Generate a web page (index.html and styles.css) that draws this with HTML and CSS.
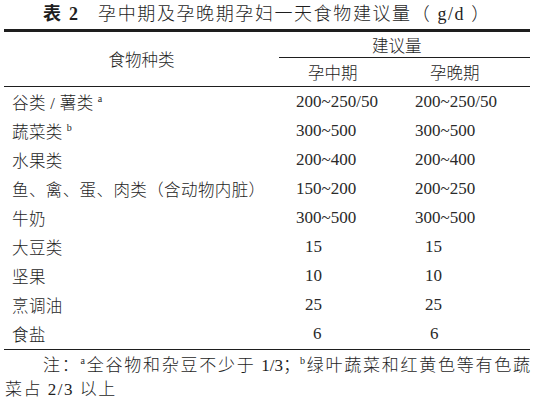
FILE: index.html
```html
<!DOCTYPE html>
<html lang="zh-CN">
<head>
<meta charset="utf-8">
<title>表 2</title>
<link rel="stylesheet" href="styles.css">
</head>
<body>
<div class="page">
  <div class="title"><b class="tno">表<span class="tnum">2</span></b><span class="tname">孕中期及孕晚期孕妇一天食物建议量（ g/d ）</span></div>
  <table class="tbl">
    <colgroup><col class="c1"><col class="c2"><col class="c3"></colgroup>
    <thead>
      <tr class="h1">
        <th rowspan="2" class="kind">食物种类</th>
        <th colspan="2" class="amount">建议量</th>
      </tr>
      <tr class="h2">
        <th class="mid">孕中期</th>
        <th class="late">孕晚期</th>
      </tr>
    </thead>
    <tbody>
      <tr><td class="name">谷类 / 薯类<sup class="fn">a</sup></td><td class="v2">200~250/50</td><td class="v3">200~250/50</td></tr>
      <tr><td class="name">蔬菜类<sup class="fn">b</sup></td><td class="v2">300~500</td><td class="v3">300~500</td></tr>
      <tr><td class="name">水果类</td><td class="v2">200~400</td><td class="v3">200~400</td></tr>
      <tr><td class="name">鱼、禽、蛋、肉类（含动物内脏）</td><td class="v2">150~200</td><td class="v3">200~250</td></tr>
      <tr><td class="name">牛奶</td><td class="v2">300~500</td><td class="v3">300~500</td></tr>
      <tr><td class="name">大豆类</td><td class="v2 i2">15</td><td class="v3 i3">15</td></tr>
      <tr><td class="name">坚果</td><td class="v2 i2">10</td><td class="v3 i3">10</td></tr>
      <tr><td class="name">烹调油</td><td class="v2 i2">25</td><td class="v3 i3">25</td></tr>
      <tr class="last"><td class="name">食盐</td><td class="v2 i2b">6</td><td class="v3 i3b">6</td></tr>
    </tbody>
  </table>
  <div class="note">
    <div class="note-l1">注：<sup class="nfn">a</sup>全谷物和杂豆不少于 1/3；<sup class="nfn">b</sup>绿叶蔬菜和红黄色等有色蔬</div>
    <div class="note-l2">菜占 2/3 以上</div>
  </div>
</div>
</body>
</html>
```
FILE: styles.css
```css
html, body {
  margin: 0;
  padding: 0;
  background: #fff;
}
body {
  font-family: "Liberation Serif", "Noto Sans CJK SC", serif;
  color: #1e1e1e;
}
.page {
  width: 534px;
  height: 406px;
  overflow: hidden;
}
.title {
  height: 29px;
  line-height: 29px;
  text-align: center;
  font-size: 18px;
  white-space: nowrap;
}
.tno {
  font-weight: bold;
  font-size: 18px;
  margin-right: 20px;
}
.tnum {
  margin-left: 8px;
}
.tname {
  letter-spacing: 1.6px;
  font-weight: 300;
}
.tbl {
  margin-left: 4px;
  width: 526px;
  border-collapse: collapse;
  table-layout: fixed;
  font-size: 16.5px;
  font-weight: 300;
}
.c1 { width: 275px; }
.c2 { width: 120px; }
.c3 { width: 131px; }
.tbl th {
  font-weight: 300;
  padding: 0;
  text-align: left;
}
.tbl thead tr.h1 th {
  border-top: 3px solid #1e1e1e;
}
.h1 { height: 27px; }
.h2 { height: 29px; }
.kind {
  text-align: center !important;
  border-bottom: 1px solid #1e1e1e;
}
.amount {
  padding-left: 93px !important;
  border-bottom: 1px solid #1e1e1e;
}
.mid {
  padding-left: 29px !important;
  border-bottom: 1px solid #1e1e1e;
}
.late {
  padding-left: 31px !important;
  border-bottom: 1px solid #1e1e1e;
}
.tbl td {
  padding: 0;
  height: 29px;
  white-space: nowrap;
}
.tbl tr.last td {
  height: 30px;
  border-bottom: 1px solid #1e1e1e;
}
.name {
  padding-left: 8px !important;
  letter-spacing: 0.4px;
}
.v2, .v3 {
  font-size: 17px;
  font-weight: 400;
  color: #2a2a2a;
}
.v2 { padding-left: 17px !important; }
.v3 { padding-left: 16px !important; }
.v2.i2 { padding-left: 26px !important; }
.v3.i3 { padding-left: 26px !important; }
.v2.i2b { padding-left: 34px !important; }
.v3.i3b { padding-left: 31px !important; }
.fn {
  font-size: 10px;
  vertical-align: 7px;
  line-height: 0;
  margin-left: 4px;
  font-family: "Liberation Serif", serif;
}
.note {
  margin-top: 4px;
  padding: 0 4px 0 5px;
  font-size: 17px;
  line-height: 24px;
  font-weight: 300;
}
.note-l1 {
  padding-left: 38px;
  text-align: justify;
  text-align-last: justify;
  text-justify: inter-character;
}
.nfn {
  font-size: 10px;
  vertical-align: 7px;
  line-height: 0;
  font-family: "Liberation Serif", serif;
}
.note-l2 {
  letter-spacing: 1.5px;
}
```
